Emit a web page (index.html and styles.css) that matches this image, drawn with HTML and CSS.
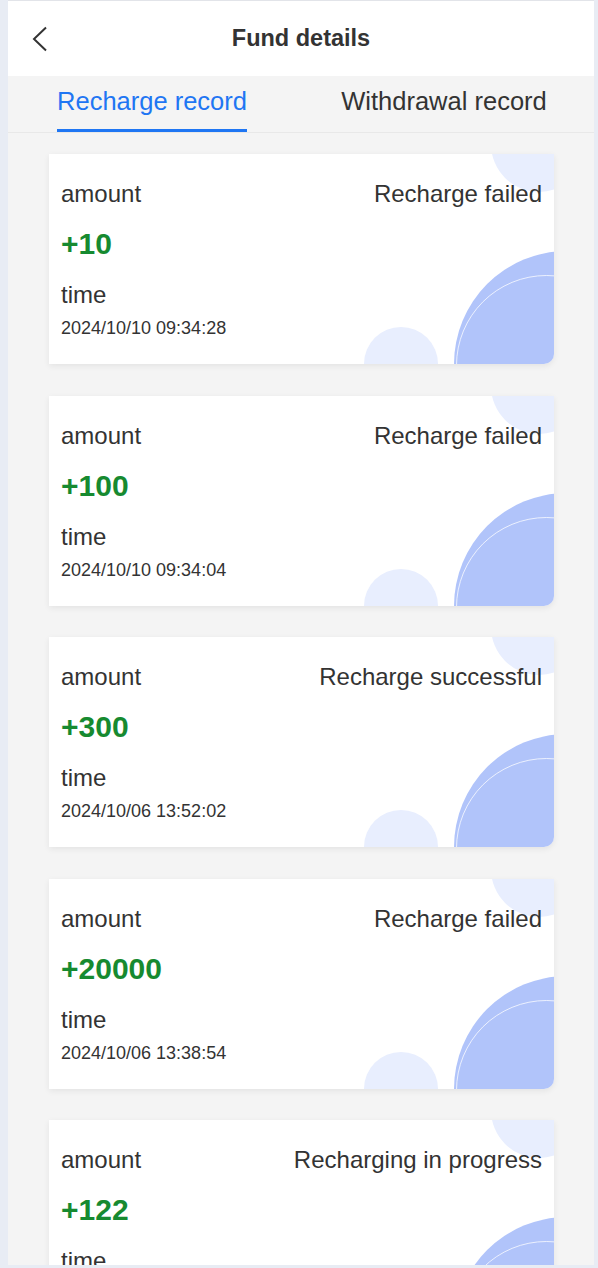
FILE: index.html
```html
<!DOCTYPE html>
<html>
	<head>
		<meta charset="UTF-8">
		<title>Fund details</title>
		<link rel="stylesheet" href="styles.css">
	</head>
	<body>
		<div class="app">
			<div class="header">
				<a href="#" class="back">
					<svg width="16" height="26" viewBox="0 0 16 26"><polyline points="14,1.5 2,13 14,24.5" fill="none" stroke="#333" stroke-width="2"/></svg>
				</a>
				<h1>Fund details</h1>
			</div>
			<ul class="tabs">
				<li class="tab on"><span>Recharge record</span></li>
				<li class="tab"><span>Withdrawal record</span></li>
			</ul>
			<ul class="list">
				<li class="card">
					<i class="dot dot-top"></i><i class="dot dot-bottom"></i><i class="dot dot-big"></i><i class="ring"></i>
					<div class="row"><span>amount</span><span>Recharge failed</span></div>
					<div class="money">+10</div>
					<div class="label">time</div>
					<div class="date">2024/10/10 09:34:28</div>
				</li>
				<li class="card">
					<i class="dot dot-top"></i><i class="dot dot-bottom"></i><i class="dot dot-big"></i><i class="ring"></i>
					<div class="row"><span>amount</span><span>Recharge failed</span></div>
					<div class="money">+100</div>
					<div class="label">time</div>
					<div class="date">2024/10/10 09:34:04</div>
				</li>
				<li class="card">
					<i class="dot dot-top"></i><i class="dot dot-bottom"></i><i class="dot dot-big"></i><i class="ring"></i>
					<div class="row"><span>amount</span><span>Recharge successful</span></div>
					<div class="money">+300</div>
					<div class="label">time</div>
					<div class="date">2024/10/06 13:52:02</div>
				</li>
				<li class="card">
					<i class="dot dot-top"></i><i class="dot dot-bottom"></i><i class="dot dot-big"></i><i class="ring"></i>
					<div class="row"><span>amount</span><span>Recharge failed</span></div>
					<div class="money">+20000</div>
					<div class="label">time</div>
					<div class="date">2024/10/06 13:38:54</div>
				</li>
				<li class="card">
					<i class="dot dot-top"></i><i class="dot dot-bottom"></i><i class="dot dot-big"></i><i class="ring"></i>
					<div class="row"><span>amount</span><span>Recharging in progress</span></div>
					<div class="money">+122</div>
					<div class="label">time</div>
					<div class="date">2024/10/06 13:20:11</div>
				</li>
			</ul>
		</div>
	</body>
</html>
```

FILE: styles.css
```css
* { margin:0; padding:0; box-sizing:border-box; }
ul,li { list-style:none; }
html, body { height:100%; overflow:hidden; }
body { background:#e8ecf4; padding:1px 4px 0 8px; font-family:"Liberation Sans", Arial, sans-serif; color:#333; }
.app { height:1265px; overflow:hidden; background:#f4f4f4; border-top:1px solid #e2e4e9; margin-top:-1px; }

/* header */
.header { position:relative; height:75px; background:#fff; display:flex; align-items:center; justify-content:center; }
.header h1 { font-size:23.5px; font-weight:bold; color:#333; line-height:1; margin-top:1px; }
.back { position:absolute; left:24px; top:25px; display:block; line-height:0; }

/* tabs */
.tabs { display:flex; height:57px; border-bottom:1px solid #e8e8e8; }
.tab { flex:1; display:flex; justify-content:center; }
.tab span { display:block; padding-top:10px; line-height:30px; padding-bottom:13px; border-bottom:3px solid transparent; font-size:25.5px; color:#333; }
.tab.on span { color:#1f76f3; border-bottom-color:#1f76f3; }
.tab:first-child { padding-right:4px; }
.tab:last-child { padding-right:6px; }

/* list */
.list { display:flex; flex-direction:column; gap:31.5px; padding:21px 40px 0 41px; }
.card { position:relative; overflow:hidden; height:210px; background:#fff; border-radius:0 0 10px 0; box-shadow:0 2px 6px rgba(0,0,0,.07); padding:25px 12px 0 12px; }
.card .row, .card .money, .card .label, .card .date { position:relative; z-index:1; }
.row { display:flex; justify-content:space-between; font-size:24px; line-height:30px; color:#333; }
.money { margin-top:17px; font-size:30px; line-height:36px; font-weight:bold; color:#168a30; }
.label { margin-top:18px; font-size:24px; line-height:30px; color:#333; }
.date { margin-top:7px; font-size:18px; line-height:22px; color:#333; }

/* decoration */
.dot { position:absolute; border-radius:50%; display:block; }
.dot-top { width:96px; height:96px; left:442px; top:-58px; background:#e8eefe; }
.dot-bottom { width:74px; height:74px; left:315px; top:173px; background:#e8eefe; }
.dot-big { width:226px; height:226px; left:405px; top:97px; background:#b1c4fa; }
.ring { position:absolute; display:block; width:181px; height:181px; left:407px; top:121px; border-radius:50%; border:1.5px solid rgba(255,255,255,.75); }
```
